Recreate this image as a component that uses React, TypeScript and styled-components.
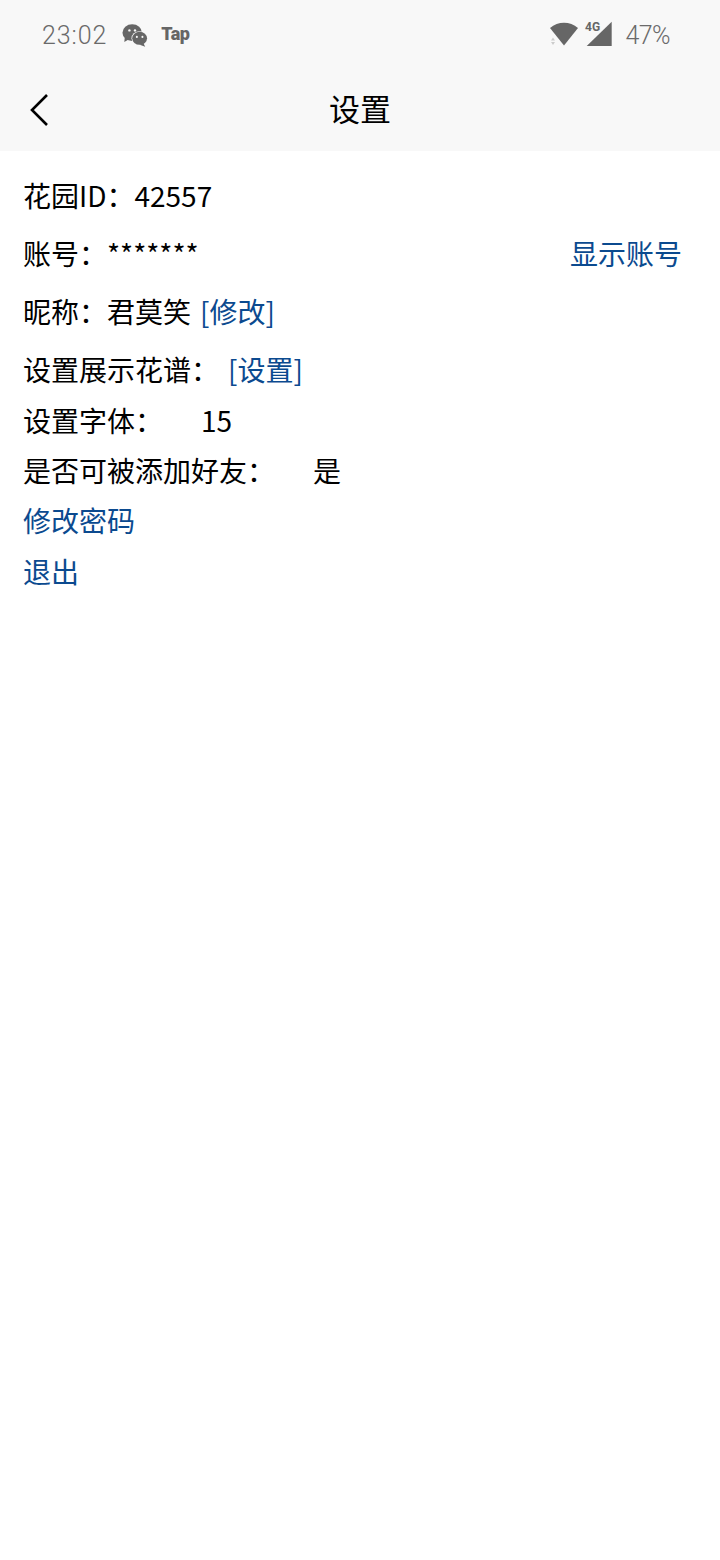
import React from 'react'
import styled, { createGlobalStyle } from 'styled-components'

const GlobalStyle = createGlobalStyle`
  html, body {
    margin: 0;
    padding: 0;
    background: #fff;
  }
  body {
    font-family: 'Noto Sans CJK SC', 'Noto Sans', sans-serif;
  }
`

const Page = styled.div`
  width: 720px;
  min-height: 1560px;
  background: #fff;
  color: #000;
`

const Header = styled.header`
  height: 151px;
  background: #f8f8f8;
  display: flex;
  flex-direction: column;
`

const StatusBar = styled.div`
  height: 70px;
  padding: 0 50px 0 42px;
  display: flex;
  align-items: center;
  justify-content: space-between;
  color: #6a6a6a;
`

const StatusGroup = styled.div`
  display: flex;
  align-items: center;
`

const Clock = styled.span`
  font-family: 'Roboto', sans-serif;
  font-weight: 300;
  font-size: 25px;
  letter-spacing: 0.9px;
  margin-right: 15px;
`

const TapMark = styled.span`
  font-family: 'Roboto', sans-serif;
  font-weight: 900;
  font-size: 18px;
  letter-spacing: -0.4px;
  margin: -3px 0 0 13px;
  color: #666;
`

const Battery = styled.span`
  font-family: 'Roboto', sans-serif;
  font-weight: 300;
  font-size: 25px;
  letter-spacing: -0.6px;
  margin-left: 14px;
`

const NavBar = styled.nav`
  position: relative;
  height: 81px;
  display: flex;
  align-items: center;
  justify-content: center;
`

const BackButton = styled.button`
  position: absolute;
  left: 28px;
  top: 22px;
  padding: 0;
  border: 0;
  background: none;
  display: flex;
`

const Title = styled.h1`
  margin: 0 0 7px;
  font-size: 31px;
  font-weight: 400;
`

const Content = styled.main`
  padding: 24px 38px 0 23px;
  display: flex;
  flex-direction: column;
`

const Row = styled.div<{ $gap?: number }>`
  margin-top: ${p => p.$gap ?? 0}px;
  height: 40px;
  display: flex;
  align-items: center;
  justify-content: space-between;
  font-size: 28px;
  line-height: 40px;
`

const Link = styled.a<{ $indent?: number }>`
  color: #0b4a8f;
  margin-left: ${p => p.$indent ?? 0}px;
`

const Value = styled.span`
  margin-left: 38px;
`

function WeChatIcon() {
  return (
    <svg width="26" height="23" viewBox="0 0 28 24" fill="#666">
      <ellipse cx="11" cy="9" rx="10.5" ry="9" />
      <path d="M3 14l-.5 5 5-3z" />
      <ellipse cx="19" cy="15" rx="8.8" ry="7.6" fill="#f8f8f8" />
      <ellipse cx="19" cy="15" rx="8" ry="7" />
      <path d="M23 20l2 4-6-2z" />
      <circle cx="8" cy="6.5" r="1.3" fill="#f8f8f8" />
      <circle cx="14" cy="6.5" r="1.3" fill="#f8f8f8" />
      <circle cx="16" cy="13.5" r="1.1" fill="#f8f8f8" />
      <circle cx="22" cy="13.5" r="1.1" fill="#f8f8f8" />
    </svg>
  )
}

function SignalIcons() {
  return (
    <svg width="62" height="30" viewBox="0 0 62 30" fill="#666">
      <path d="M0 8C8 1 20 1 28 8L14 25.5z" />
      <path d="M1 20.500l2-3 2 3z M1 22l2 3 2-3z" fill="#ccc" />
      <path d="M36.700 26L61.700 1.700V26z" />
      <text x="35" y="10.700" fontFamily="Roboto, sans-serif" fontWeight="700" fontSize="12">4G</text>
    </svg>
  )
}

export default function App() {
  return (
    <>
      <GlobalStyle />
      <Page>
        <Header>
          <StatusBar>
            <StatusGroup>
              <Clock>23:02</Clock>
              <WeChatIcon />
              <TapMark>Tap</TapMark>
            </StatusGroup>
            <StatusGroup>
              <SignalIcons />
              <Battery>47%</Battery>
            </StatusGroup>
          </StatusBar>
          <NavBar>
            <BackButton aria-label="返回">
              <svg width="24" height="36" viewBox="0 0 24 36" fill="none" stroke="#000" strokeWidth="2.6">
                <path d="M19 3L4 18l15 15" />
              </svg>
            </BackButton>
            <Title>设置</Title>
          </NavBar>
        </Header>
        <Content>
          <Row><span>花园ID：42557</span></Row>
          <Row $gap={18}>
            <span>账号：*******</span>
            <Link>显示账号</Link>
          </Row>
          <Row $gap={18}><span>昵称：君莫笑<Link $indent={9}>[修改]</Link></span></Row>
          <Row $gap={18}><span>设置展示花谱：<Link $indent={9}>[设置]</Link></span></Row>
          <Row $gap={11}><span>设置字体：<Value>15</Value></span></Row>
          <Row $gap={10}><span>是否可被添加好友：<Value>是</Value></span></Row>
          <Row $gap={10}><Link>修改密码</Link></Row>
          <Row $gap={11}><Link>退出</Link></Row>
        </Content>
      </Page>
    </>
  )
}
